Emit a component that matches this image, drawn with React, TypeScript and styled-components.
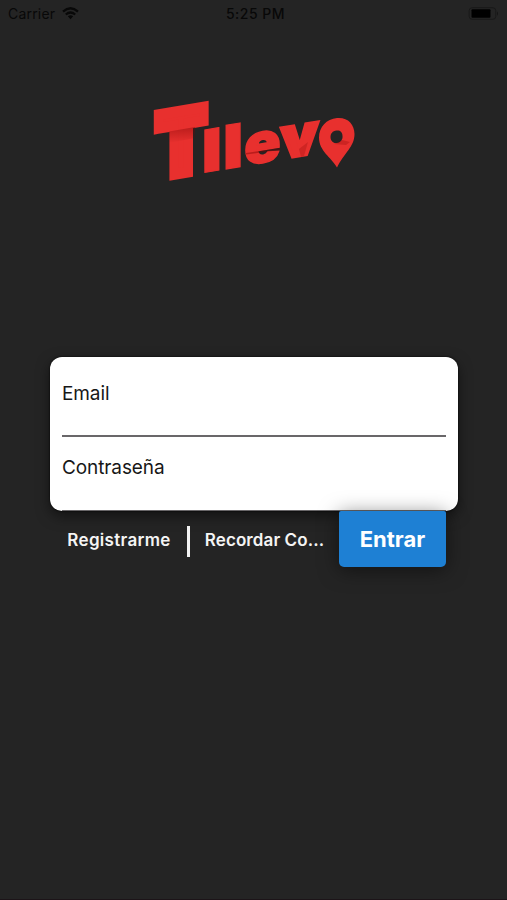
import React from "react";
import styled, { createGlobalStyle } from "styled-components";

const GlobalStyle = createGlobalStyle`
  * { box-sizing: border-box; }
  html, body { margin: 0; background: #242424; }
  body { font-family: Inter, "Liberation Sans", sans-serif; }
`;

const Screen = styled.main`
  width: 507px;
  height: 900px;
  overflow: hidden;
  display: flex;
  flex-direction: column;
  background: #242424;
  border-bottom: 1px solid #1c1418;
`;

const StatusBar = styled.header`
  height: 28px;
  padding: 0 8px 2px 8px;
  display: grid;
  grid-template-columns: 1fr auto 1fr;
  align-items: center;
  color: #080808;
  font-size: 14px;
`;

const Carrier = styled.div`
  display: flex;
  align-items: center;
  gap: 7px;
  letter-spacing: 0.2px;
`;

const Clock = styled.div`
  font-weight: 500;
  letter-spacing: 0.5px;
  padding-left: 4px;
`;

const BatterySlot = styled.div`
  display: flex;
  justify-content: flex-end;
`;

const LogoArea = styled.div`
  height: 329px;
  padding: 62px 0 0 145px;
`;

const LogoSvg = styled.svg`
  display: block;
  overflow: visible;
  font-family: Inter, sans-serif;
  font-weight: 900;
  font-size: 100px;
`;

const Form = styled.form`
  width: 408px;
  margin: 0 0 0 50px;
`;

const Card = styled.section`
  height: 154px;
  padding: 0 12px;
  overflow: hidden;
  border-radius: 12px;
  background: #fff;
  box-shadow: 0 5px 14px rgba(0, 0, 0, 0.5), 0 0 2px #000;
`;

const Field = styled.label<{ $height: number; $top: number }>`
  display: block;
  height: ${(p) => p.$height}px;
  padding-top: ${(p) => p.$top}px;
  border-bottom: 2px solid #696769;
  color: #171717;
  font-size: 19px;
  letter-spacing: -0.1px;
  line-height: 24px;
`;

const Actions = styled.div`
  display: flex;
  height: 56px;
  padding: 0 12px;
  align-items: center;
`;

const LinkButton = styled.button<{ $width: number; $spacing: number }>`
  width: ${(p) => p.$width}px;
  padding: 2px 0 0;
  border: 0;
  background: none;
  color: #f4f4f4;
  font: 600 17px/24px Inter, sans-serif;
  letter-spacing: ${(p) => p.$spacing}px;
  text-align: center;
  white-space: nowrap;
`;

const Divider = styled.span`
  width: 3px;
  height: 31px;
  margin: 4px 0 0 11px;
  background: #f2f2f2;
`;

const Submit = styled.button`
  position: relative;
  width: 107px;
  height: 56px;
  margin-left: auto;
  padding: 1px 0 0;
  border: 0;
  border-radius: 2px 2px 5px 5px;
  background: #1e80d4;
  box-shadow: 0 3px 20px rgba(0, 0, 0, 0.5);
  color: #fff;
  font: 700 22px/55px Inter, sans-serif;
`;

const RED = "#e8302e";
const SLOPE = -0.165;

type LetterProps = { char: string; x: number; y: number; sx: number; sy: number; stroke: number };

function Letter({ char, x, y, sx, sy, stroke }: LetterProps) {
  return (
    <text
      transform={`matrix(${sx} ${SLOPE * sx} 0 ${sy} ${x} ${y})`}
      fill={RED}
      stroke={RED}
      strokeWidth={stroke}
      strokeLinejoin="miter"
    >
      {char}
    </text>
  );
}

function Logo() {
  return (
    <LogoSvg width="220" height="100" viewBox="145 90 220 100" role="img" aria-label="Tllevo">
      <defs>
        <linearGradient id="fold" x1="0" y1="0" x2="0" y2="1">
          <stop offset="0" stopColor="#700" stopOpacity="0.4" />
          <stop offset="1" stopColor="#700" stopOpacity="0" />
        </linearGradient>
      </defs>
      <Letter char="T" x={156.6} y={177.3} sx={0.72} sy={0.855} stroke={13} />
      <path d="M169 131.500L195 127V138L169 143Z" fill="url(#fold)" />
      <Letter char="l" x={201.5} y={173} sx={0.7} sy={0.585} stroke={2} />
      <Letter char="l" x={222.800} y={169.500} sx={0.7} sy={0.6} stroke={2} />
      <Letter char="e" x={244.300} y={165.500} sx={0.6} sy={0.56} stroke={3} />
      <path d="M246 153L280 148V150L246 154.500Z" fill="#700" opacity="0.4" />
      <Letter char="v" x={281} y={158.800} sx={0.59} sy={0.56} stroke={6} />
      <path d="M299 149L308 142L304 156L301 157Z" fill="#700" opacity="0.22" />
      <path
        fill={RED}
        fillRule="evenodd"
        d="M337 167.500C331 157 319 151 319 137.500C319 127 326.500 119 337 118C347.500 117 354.500 124 354.500 134C354.500 147 344 153 337 167.500ZM336.500 130.500C332.500 131 330.500 133.500 330.500 137C330.500 141 333.500 143.500 337 143C340.500 142.500 343 139.500 342.500 136C342.500 132 340 130 336.500 130.500Z"
      />
      <path d="M334 144L342 140L350 142L346 145Z" fill="#700" opacity="0.25" />
    </LogoSvg>
  );
}

function WifiIcon() {
  return (
    <svg width="17" height="13" viewBox="0 0 17 13" fill="none" stroke="#080808" strokeWidth="2.3">
      <path d="M1 4.600Q8.500 -2 16 4.600M3.800 7.500Q8.500 3.400 13.200 7.500" />
      <path d="M5.800 9.300Q8.500 7.200 11.200 9.300L8.500 12.300Z" fill="#080808" stroke="none" />
    </svg>
  );
}

function BatteryIcon() {
  return (
    <svg width="31" height="13" viewBox="0 0 31 13">
      <rect x="1.200" y="0.700" width="26.600" height="11.600" rx="3" fill="none" stroke="#191919" />
      <rect x="3.500" y="2.300" width="19" height="8.500" rx="1" fill="#000" />
      <path d="M29 4.200Q31 6.500 29 8.800Z" fill="#151515" />
    </svg>
  );
}

export default function App() {
  return (
    <>
      <GlobalStyle />
      <Screen>
        <StatusBar>
          <Carrier>
            Carrier
            <WifiIcon />
          </Carrier>
          <Clock>5:25 PM</Clock>
          <BatterySlot>
            <BatteryIcon />
          </BatterySlot>
        </StatusBar>
        <LogoArea>
          <Logo />
        </LogoArea>
        <Form>
          <Card>
            <Field $height={80} $top={25}>Email</Field>
            <Field $height={75} $top={19}>Contraseña</Field>
          </Card>
          <Actions>
            <LinkButton type="button" $width={114} $spacing={0.3}>Registrarme</LinkButton>
            <Divider />
            <LinkButton type="button" $width={149} $spacing={0.1}>Recordar Co...</LinkButton>
            <Submit type="button">Entrar</Submit>
          </Actions>
        </Form>
      </Screen>
    </>
  );
}
